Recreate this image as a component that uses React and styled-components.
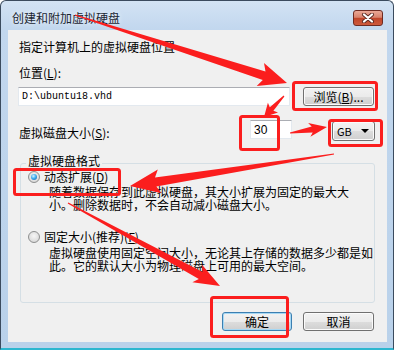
import React from 'react';
import styled, { createGlobalStyle } from 'styled-components';

const GlobalStyle = createGlobalStyle`
    body{
        margin:0;
        background:#fff;
        font-family:"Noto Sans CJK SC", "Liberation Sans", sans-serif;
    }
`;

const Frame = styled.div`
    position:relative;
    width:394px;
    height:350px;
    box-sizing:border-box;
    border:1px solid #3b4b5e;
    border-bottom:2px solid #2cb6cf;
    border-radius:6px 6px 0 0;
    background:linear-gradient(#d3e3f4 0, #c2d7ee 28px, #b9d1ea 100%);
    padding:0 6px 6px 7px;
    display:flex;
    flex-direction:column;
    font-size:12px;
    color:#000;
`;

const TitleBar = styled.div`
    height:29px;
    display:flex;
    align-items:flex-start;
`;

const Title = styled.div`
    margin:10px 0 0 4px;
    line-height:14px;
    color:#1b2633;
    text-shadow:0 0 5px rgba(255,255,255,.9);
`;

const CloseButton = styled.div`
    margin:9px 4px 0 auto;
    width:30px;
    height:16px;
    box-sizing:border-box;
    border:1px solid #6e2b22;
    border-radius:3px;
    background:linear-gradient(#eaa896 0%, #d8836d 45%, #c0452a 52%, #cd5a3c 100%);
    display:flex;
    align-items:center;
    justify-content:center;
`;

const Client = styled.div`
    flex:1;
    background:#f0f0f0;
    padding:10px 13px 0 10px;
    display:flex;
    flex-direction:column;
`;

const Text = styled.div`
    line-height:14px;
    margin-top:${props => props.top || 0}px;
    padding-left:1px;
`;

const PathRow = styled.div`
    margin-top:7px;
    display:flex;
    gap:13px;
    height:19px;
`;

const Field = styled.div`
    box-sizing:border-box;
    height:${props => props.h || 19}px;
    width:${props => props.w ? props.w + 'px' : 'auto'};
    flex:${props => props.w ? 'none' : 1};
    margin-left:${props => props.auto ? 'auto' : '0'};
    background:#fff;
    border:1px solid #e3e9ef;
    border-top-color:#abadb3;
    display:flex;
    align-items:center;
    padding-left:3px;
    font-family:${props => props.mono ? '"Liberation Mono", monospace' : '"Liberation Sans", sans-serif'};
    font-size:${props => props.mono ? '10px' : '12px'};
`;

const Button = styled.div`
    box-sizing:border-box;
    width:${props => props.w}px;
    height:19px;
    border:1px solid ${props => props.primary ? '#3c7fb1' : '#707070'};
    border-radius:3px;
    background:linear-gradient(#f2f2f2 0%, #ebebeb 50%, #dddddd 51%, #cfcfcf 100%);
    box-shadow:inset 0 0 0 1px ${props => props.primary ? '#a6d8f4' : '#fbfbfb'};
    display:flex;
    align-items:center;
    justify-content:center;
    line-height:14px;
`;

const SizeRow = styled.div`
    margin-top:14px;
    display:flex;
    align-items:flex-start;
    height:21px;
`;

const SizeLabel = styled.div`
    padding:6px 0 0 1px;
    line-height:14px;
`;

const Combo = styled(Button)`
    width:43px;
    height:20px;
    margin:1px -1px 0 40px;
    justify-content:space-between;
    padding:0 5px 0 4px;
    font-size:11px;
`;

const Arrow = styled.span`
    width:0;
    height:0;
    border-left:4px solid transparent;
    border-right:4px solid transparent;
    border-top:4px solid #000;
`;

const Group = styled.div`
    position:relative;
    margin:22px -1px 0 2px;
    border:1px solid #d5dfe5;
    border-radius:3px;
    padding:6px 8px 30px 7px;
`;

const Legend = styled.div`
    position:absolute;
    top:-10px;
    left:5px;
    padding:0 2px;
    line-height:14px;
    background:#f0f0f0;
`;

const Option = styled.div`
    display:flex;
    align-items:center;
    gap:4px;
    line-height:14px;
    margin-top:${props => props.top || 0}px;
`;

const Radio = styled.span`
    box-sizing:border-box;
    width:12px;
    height:12px;
    border-radius:50%;
    border:1px solid #8e8f8f;
    background:radial-gradient(circle at 50% 40%, #f6f6f6 0%, #dcdcdc 70%, #c9c9c9 100%);
    display:flex;
    align-items:center;
    justify-content:center;
    &::after{
        content:'';
        display:${props => props.checked ? 'block' : 'none'};
        width:6px;
        height:6px;
        border-radius:50%;
        background:radial-gradient(circle at 40% 35%, #d6f4ff 0%, #40aef0 45%, #1657a3 100%);
    }
`;

const Desc = styled.div`
    margin:${props => props.top || 0}px 0 0 21px;
    line-height:13px;
    white-space:nowrap;
`;

const ButtonRow = styled.div`
    margin-top:9px;
    display:flex;
    justify-content:flex-end;
    gap:11px;
`;

const Overlay = styled.svg`
    position:absolute;
    left:-1px;
    top:-1px;
    pointer-events:none;
`;

// tapered arrow like a screenshot tool draws it
const arrowPoints = (x1, y1, x2, y2, head, wing, shaft, back = 4) => {
    const len = Math.hypot(x2 - x1, y2 - y1);
    const ux = (x2 - x1) / len, uy = (y2 - y1) / len;
    const nx = -uy, ny = ux;
    const bx = x2 - ux * head, by = y2 - uy * head;
    const p = [
        [x1 + nx * 0.6, y1 + ny * 0.6],
        [bx + nx * shaft, by + ny * shaft],
        [bx - ux * back + nx * wing, by - uy * back + ny * wing],
        [x2, y2],
        [bx - ux * back - nx * wing, by - uy * back - ny * wing],
        [bx - nx * shaft, by - ny * shaft],
        [x1 - nx * 0.6, y1 - ny * 0.6],
    ];
    return p.map(q => q[0].toFixed(1) + ',' + q[1].toFixed(1)).join(' ');
};

const boxes = [
    [293.5, 82.5, 83, 27],
    [240.5, 116.5, 38, 33],
    [329.5, 120.5, 52, 25],
    [14.5, 169.5, 105, 25],
    [211.5, 297.5, 76, 39],
];

const arrows = [
    [75, 15, 287, 83, 24, 12, 4.5],
    [284, 96, 264, 117, 11, 7, 2.5, 2],
    [290, 133, 327, 127, 15, 7, 3, 3],
    [334, 154, 130, 186, 26, 12, 4.5],
    [68, 203, 220, 286, 22, 10, 4],
];

const RED = '#fb1e1e';

const App = () => {
    return (
        <Frame>
            <GlobalStyle />
            <TitleBar>
                <Title>创建和附加虚拟硬盘</Title>
                <CloseButton>
                    <svg width="14" height="10" viewBox="0 0 14 10">
                        <path d="M3 1.5 L11 8.5 M11 1.5 L3 8.5" stroke="#5b2a22" strokeWidth="4" strokeLinecap="round" />
                        <path d="M3 1.5 L11 8.5 M11 1.5 L3 8.5" stroke="#fff" strokeWidth="2.2" strokeLinecap="round" />
                    </svg>
                </CloseButton>
            </TitleBar>
            <Client>
                <Text>指定计算机上的虚拟硬盘位置</Text>
                <Text top={12}>位置(<u>L</u>):</Text>
                <PathRow>
                    <Field mono>D:\ubuntu18.vhd</Field>
                    <Button w={71}>浏览(<u>B</u>)...</Button>
                </PathRow>
                <SizeRow>
                    <SizeLabel>虚拟磁盘大小(<u>S</u>):</SizeLabel>
                    <Field w={42} auto>30</Field>
                    <Combo as="div">GB<Arrow /></Combo>
                </SizeRow>
                <Group>
                    <Legend>虚拟硬盘格式</Legend>
                    <Option>
                        <Radio checked />
                        <span>动态扩展(<u>D</u>)</span>
                    </Option>
                    <Desc top={1}>
                        随着数据保存到此虚拟硬盘，其大小扩展为固定的最大大<br />
                        小。删除数据时，不会自动减小磁盘大小。
                    </Desc>
                    <Option top={19}>
                        <Radio />
                        <span>固定大小(推荐)(<u>F</u>)</span>
                    </Option>
                    <Desc top={2}>
                        虚拟硬盘使用固定空间大小，无论其上存储的数据多少都是如<br />
                        此。它的默认大小为物理磁盘上可用的最大空间。
                    </Desc>
                </Group>
                <ButtonRow>
                    <Button w={70} primary>确定</Button>
                    <Button w={71}>取消</Button>
                </ButtonRow>
            </Client>
            <Overlay width="394" height="350" viewBox="0 0 394 350">
                {boxes.map((b, i) => (
                    <rect key={i} x={b[0]} y={b[1]} width={b[2]} height={b[3]} rx="2"
                        fill="none" stroke={RED} strokeWidth="3" />
                ))}
                {arrows.map((a, i) => (
                    <polygon key={i} points={arrowPoints(...a)} fill={RED} />
                ))}
            </Overlay>
        </Frame>
    );
};

export default App;
